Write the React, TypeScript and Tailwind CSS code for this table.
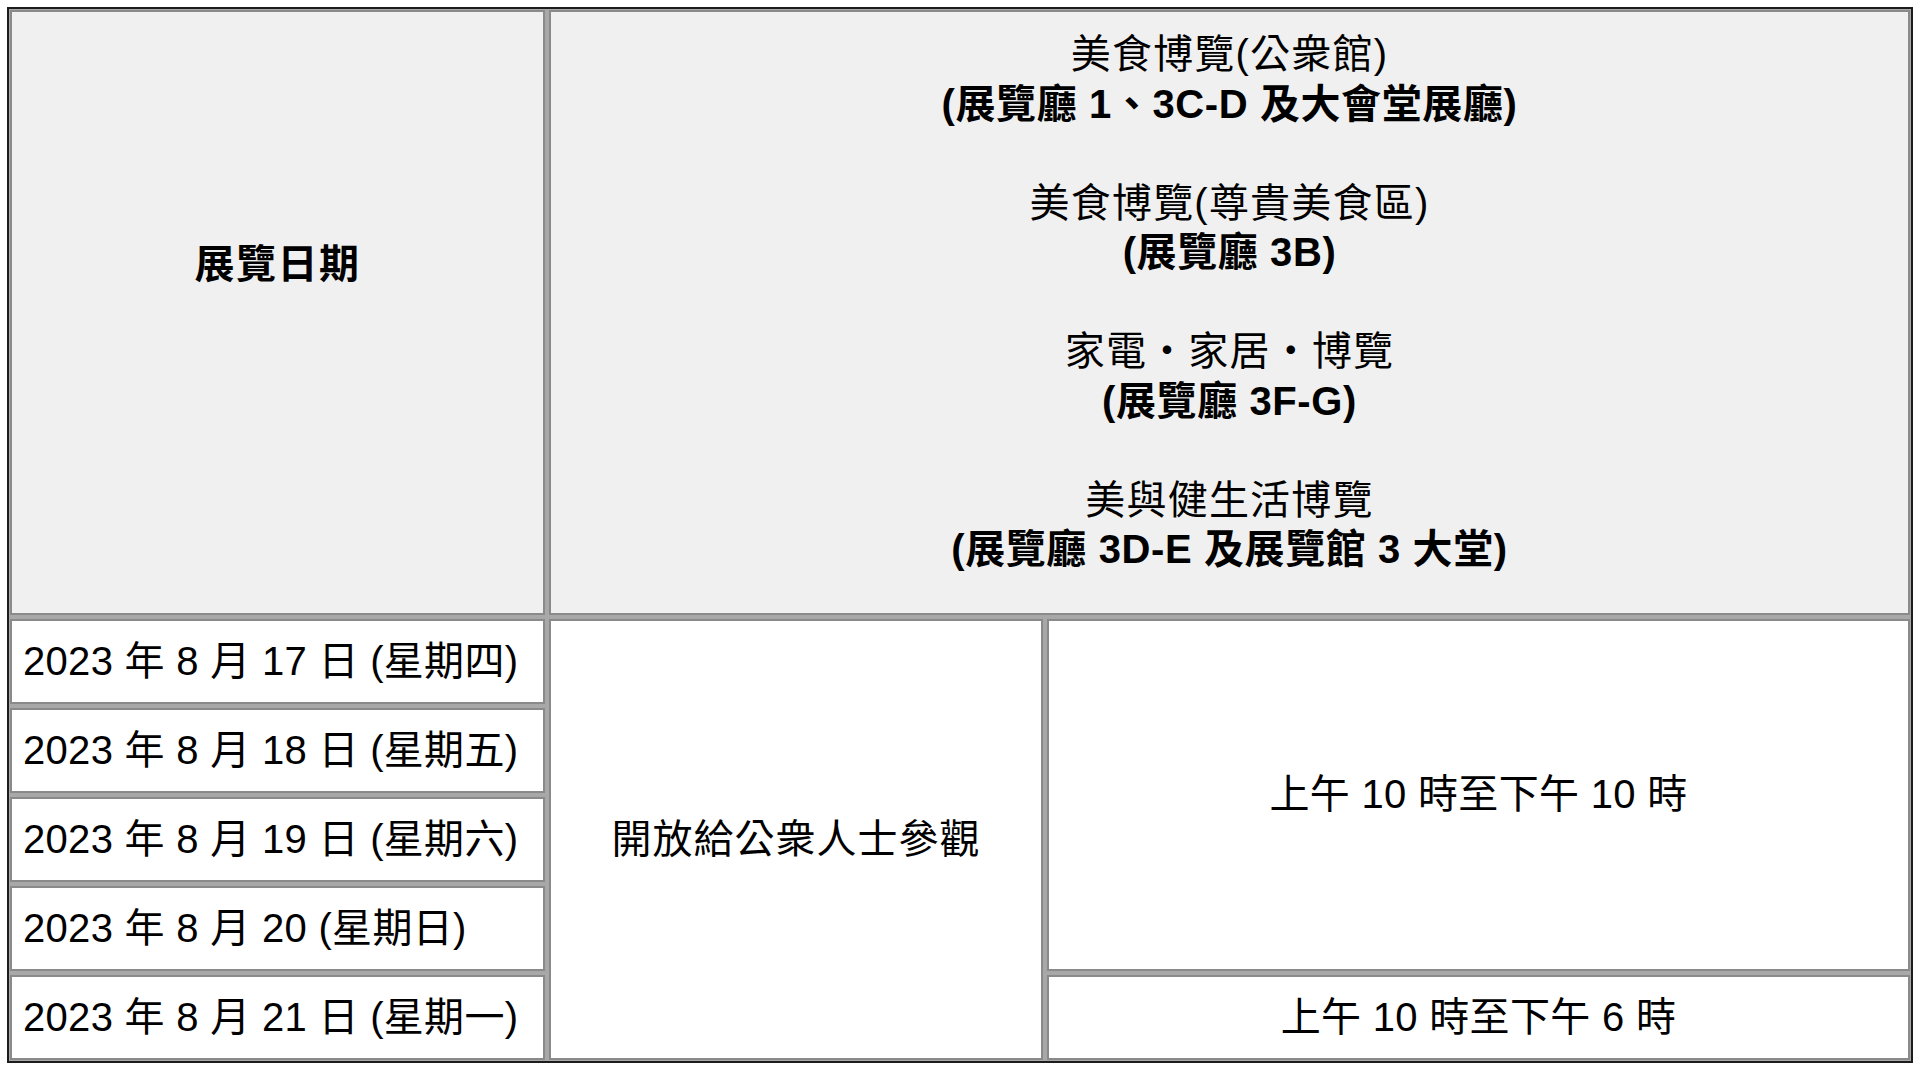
const FONT = "font-['Liberation_Sans','Noto_Sans_CJK_TC',sans-serif]";

const dates = [
  "2023 年 8 月 17 日 (星期四)",
  "2023 年 8 月 18 日 (星期五)",
  "2023 年 8 月 19 日 (星期六)",
  "2023 年 8 月 20 (星期日)",
  "2023 年 8 月 21 日 (星期一)",
];

const halls = [
  { name: "美食博覽(公衆館)", place: "(展覽廳 1、3C-D 及大會堂展廳)" },
  { name: "美食博覽(尊貴美食區)", place: "(展覽廳 3B)" },
  { name: "家電・家居・博覽", place: "(展覽廳 3F-G)" },
  { name: "美與健生活博覽", place: "(展覽廳 3D-E 及展覽館 3 大堂)" },
];

/* one table cell: grey inset border, content centred unless told otherwise */
function Cell({ className = "", children }: { className?: string; children: React.ReactNode }) {
  return <div className={`border-2 border-[#8a8a8a] flex items-center ${className}`}>{children}</div>;
}

export default function App() {
  return (
    <div className={`min-h-screen bg-white text-black ${FONT} text-[40px] leading-[49.5px]`}>
      <div className="ml-[7px] mt-[7px] w-[1906px] border-2 border-[#1c1c1c] bg-[#a8a8a8] p-px">
        <div className="grid grid-cols-[535px_494px_1fr] grid-rows-[605px_repeat(5,85px)] gap-[4px] bg-[#a8a8a8]">
          {/* header */}
          <Cell className="bg-[#f0f0f0] justify-center pb-[96px] font-bold tracking-[1.5px]">展覽日期</Cell>
          <Cell className="col-span-2 bg-[#f0f0f0] flex-col !items-center !justify-start pt-[18px]">
            <div className="flex flex-col items-center gap-[49.5px]">
              {halls.map(h => (
                <div key={h.name} className="flex flex-col items-center">
                  <span className="tracking-[1.2px]">{h.name}</span>
                  <span className="font-bold tracking-[0.6px]">{h.place}</span>
                </div>
              ))}
            </div>
          </Cell>

          {/* body */}
          {dates.map(d => (
            <Cell key={d} className="bg-white pl-[11px] whitespace-nowrap tracking-[0.3px]">
              {d}
            </Cell>
          ))}
          <Cell className="col-start-2 row-start-2 row-span-5 bg-white justify-center tracking-[1px]">開放給公衆人士參觀</Cell>
          <Cell className="col-start-3 row-start-2 row-span-4 bg-white justify-center tracking-[0.3px]">上午 10 時至下午 10 時</Cell>
          <Cell className="col-start-3 row-start-6 bg-white justify-center tracking-[0.3px]">上午 10 時至下午 6 時</Cell>
        </div>
      </div>
    </div>
  );
}
